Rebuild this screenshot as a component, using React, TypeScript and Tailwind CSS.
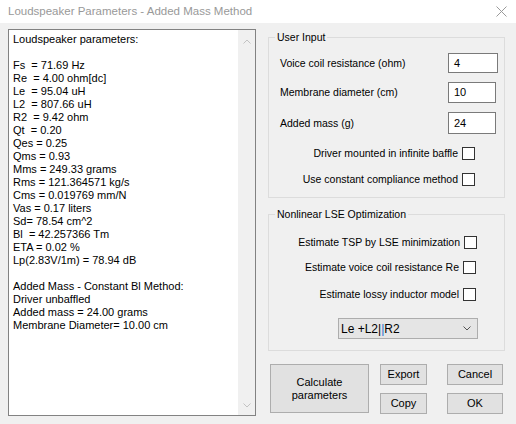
import type { ReactNode } from "react"

const FONT = "font-['Liberation_Sans',Arial,sans-serif]"

const REPORT = [
  "Loudspeaker parameters:",
  "",
  "Fs  = 71.69 Hz",
  "Re  = 4.00 ohm[dc]",
  "Le  = 95.04 uH",
  "L2  = 807.66 uH",
  "R2  = 9.42 ohm",
  "Qt  = 0.20",
  "Qes = 0.25",
  "Qms = 0.93",
  "Mms = 249.33 grams",
  "Rms = 121.364571 kg/s",
  "Cms = 0.019769 mm/N",
  "Vas = 0.17 liters",
  "Sd= 78.54 cm^2",
  "Bl  = 42.257366 Tm",
  "ETA = 0.02 %",
  "Lp(2.83V/1m) = 78.94 dB",
  "",
  "Added Mass - Constant Bl Method:",
  "Driver unbaffled",
  "Added mass = 24.00 grams",
  "Membrane Diameter= 10.00 cm",
]

function Chevron(props: { up?: boolean; color: string }) {
  return (
    <svg width="8" height="5" viewBox="0 0 8 5" fill="none">
      <polyline
        points={props.up ? "0.5 4.5 4 1 7.5 4.5" : "0.5 0.5 4 4 7.5 0.5"}
        stroke={props.color}
        strokeWidth="1"
      />
    </svg>
  )
}

function CheckBox() {
  return <span className="block h-[13px] w-[13px] shrink-0 border border-[#333333] bg-white" />
}

function CheckRow(props: { label: string; pr: string; mt: string }) {
  return (
    <div className={`flex h-[13px] items-center justify-end gap-[4px] ${props.pr} ${props.mt}`}>
      <span className="text-[10.5px] leading-[13px]">{props.label}</span>
      <CheckBox />
    </div>
  )
}

function InputRow(props: { label: string; value: string; mt: string; box: string }) {
  return (
    <div className={`flex items-center justify-between pl-[11px] pr-[8px] ${props.mt}`}>
      <span className="text-[10.5px] leading-[13px]">{props.label}</span>
      <div className={`flex items-center border border-[#7a7a7a] bg-white pl-[5px] ${props.box}`}>
        {props.value}
      </div>
    </div>
  )
}

function Group(props: { title: string; children: ReactNode; className?: string }) {
  return (
    <fieldset className={`border border-[#dcdcdc] ${props.className ?? ""}`}>
      <legend className="ml-[6px] px-[2px] text-[10.5px] leading-[13px]">{props.title}</legend>
      {props.children}
    </fieldset>
  )
}

function Button(props: { children: ReactNode; className: string }) {
  return (
    <div
      className={`flex items-center justify-center border border-[#adadad] bg-[#e1e1e1] text-center leading-[13px] ${props.className}`}
    >
      {props.children}
    </div>
  )
}

export default function App() {
  return (
    <div className={`h-[424px] w-[516px] overflow-hidden bg-[#f0f0f0] text-[11px] text-black ${FONT}`}>
      <div className="flex h-[23px] items-center justify-between bg-white pl-[8px] pr-[9px]">
        <span className="text-[11.5px] text-[#999999]">Loudspeaker Parameters - Added Mass Method</span>
        <svg width="11" height="11" viewBox="0 0 11 11">
          <path d="M0.5 0.5 L10.5 10.5 M10.5 0.5 L0.5 10.5" stroke="#9a9a9a" strokeWidth="1" />
        </svg>
      </div>

      <div className="flex pl-[8px] pt-[6px]">
        <div className="flex h-[387px] w-[248px] border border-[#828282] bg-white">
          <div className="flex-1 pl-[4px] pt-[3px]">
            {REPORT.map((line, i) => (
              <div key={i} className="h-[13px] whitespace-pre leading-[13px]">
                {line}
              </div>
            ))}
          </div>
          <div className="flex w-[17px] flex-col items-center justify-between bg-[#f0f0f0] pb-[7px] pt-[9px]">
            <Chevron up color="#c2c2c2" />
            <Chevron color="#c2c2c2" />
          </div>
        </div>

        <div className="ml-[12px] flex w-[237px] flex-col pt-[2px]">
          <Group title="User Input" className="pb-[11px]">
            <InputRow label="Voice coil resistance (ohm)" value="4" mt="mt-[9px]" box="h-[20px] w-[50px] -mr-[2px]" />
            <InputRow label="Membrane diameter (cm)" value="10" mt="mt-[9px]" box="h-[21px] w-[48px]" />
            <InputRow label="Added mass (g)" value="24" mt="mt-[9px]" box="h-[22px] w-[48px]" />
            <CheckRow label="Driver mounted in infinite baffle" pr="pr-[29px]" mt="mt-[13px]" />
            <CheckRow label="Use constant compliance method" pr="pr-[29px]" mt="mt-[13px]" />
          </Group>

          <Group title="Nonlinear LSE Optimization" className="mt-[10px] pb-[11px]">
            <CheckRow label="Estimate TSP by LSE minimization" pr="pr-[27px]" mt="mt-[15px]" />
            <CheckRow label="Estimate voice coil resistance Re" pr="pr-[28px]" mt="mt-[12px]" />
            <CheckRow label="Estimate lossy inductor model" pr="pr-[28px]" mt="mt-[14px]" />
            <div className="ml-[69px] mt-[17px] flex h-[21px] w-[140px] items-center justify-between border border-[#adadad] bg-[#e5e5e5] pl-[2px] pr-[6px] text-[12px]">
              <span>
                Le +L2|<span className="text-[#1a6fd1]">|</span>R2
              </span>
              <Chevron color="#555555" />
            </div>
          </Group>

          <div className="ml-[2px] mt-[13px] flex">
            <Button className="h-[49px] w-[99px]">
              Calculate
              <br />
              parameters
            </Button>
            <div className="ml-[11px] grid grid-cols-[47px_56px] gap-x-[20px] gap-y-[8px]">
              <Button className="h-[21px]">Export</Button>
              <Button className="h-[21px]">Cancel</Button>
              <Button className="h-[21px]">Copy</Button>
              <Button className="h-[21px]">OK</Button>
            </div>
          </div>
        </div>
      </div>
    </div>
  )
}
